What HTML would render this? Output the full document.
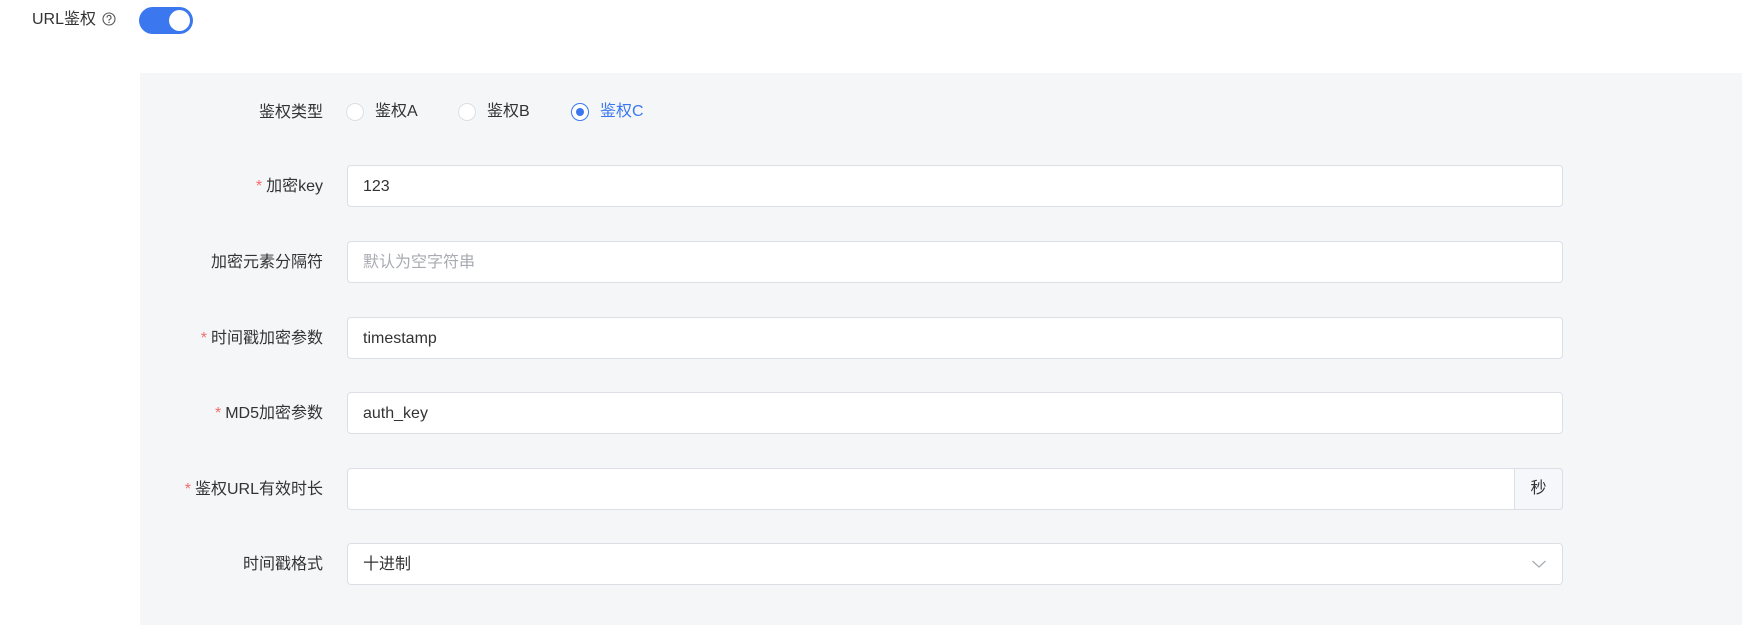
<!DOCTYPE html>
<html><head><meta charset="utf-8"><style>
*{box-sizing:border-box;margin:0;padding:0}
body{width:1761px;height:643px;background:#fff;font-family:"Liberation Sans","Noto Sans CJK SC",sans-serif;font-size:16px;color:#333;position:relative;overflow:hidden}
.abs{position:absolute}
.panel{left:140px;top:73px;width:1602px;height:552px;background:#f5f6f8}
.lbl{right:1438px;width:250px;text-align:right;height:42px;line-height:43px;white-space:nowrap}
.lbl .s{color:#f56c6c;margin-right:4px}
.inp{left:347px;width:1216px;height:42px;background:#fff;border:1px solid #dcdfe6;border-radius:4px;line-height:41px;padding-left:15px}
.ph{color:#a8abb2}
.radio{width:18px;height:18px;border:1px solid #dcdfe6;border-radius:50%;background:#fff;top:103px}
</style></head><body>
<div class="abs" style="left:32px;top:9px;line-height:22px;">URL鉴权</div>
<svg class="abs" style="left:102px;top:12px" width="14" height="14" viewBox="0 0 14 14"><circle cx="7" cy="7" r="6" fill="none" stroke="#555" stroke-width="1.1"/><path d="M5 5.6a2 2 0 1 1 2.6 1.8c-.5.2-.6.5-.6 1v.4" fill="none" stroke="#555" stroke-width="1.1"/><circle cx="7" cy="10.3" r=".7" fill="#555"/></svg>
<div class="abs" style="left:139px;top:7px;width:54px;height:27px;border-radius:14px;background:#3b78f0"></div>
<div class="abs" style="left:169px;top:10px;width:21px;height:21px;border-radius:50%;background:#fff"></div>
<div class="abs panel"></div>

<div class="abs lbl" style="top:91px">鉴权类型</div>
<div class="abs radio" style="left:346px"></div><div class="abs" style="left:375px;top:101px;line-height:22px">鉴权A</div>
<div class="abs radio" style="left:458px"></div><div class="abs" style="left:487px;top:101px;line-height:22px">鉴权B</div>
<div class="abs radio" style="left:571px;border-color:#3b78f0"></div><div class="abs" style="left:576px;top:108px;width:8px;height:8px;border-radius:50%;background:#3b78f0"></div>
<div class="abs" style="left:600px;top:101px;line-height:22px;color:#3b78f0">鉴权C</div>

<div class="abs lbl" style="top:165px"><span class="s">*</span>加密key</div>
<div class="abs inp" style="top:165px">123</div>
<div class="abs lbl" style="top:241px">加密元素分隔符</div>
<div class="abs inp" style="top:241px"><span class="ph">默认为空字符串</span></div>
<div class="abs lbl" style="top:317px"><span class="s">*</span>时间戳加密参数</div>
<div class="abs inp" style="top:317px">timestamp</div>
<div class="abs lbl" style="top:392px"><span class="s">*</span>MD5加密参数</div>
<div class="abs inp" style="top:392px">auth_key</div>
<div class="abs lbl" style="top:468px"><span class="s">*</span>鉴权URL有效时长</div>
<div class="abs inp" style="top:468px"></div>
<div class="abs" style="left:1514px;top:468px;width:49px;height:42px;background:#f5f7fa;border:1px solid #dcdfe6;border-radius:0 4px 4px 0;text-align:center;line-height:40px">秒</div>
<div class="abs lbl" style="top:543px">时间戳格式</div>
<div class="abs inp" style="top:543px">十进制</div>
<svg class="abs" style="left:1531px;top:559px" width="16" height="10" viewBox="0 0 16 10"><path d="M1.5 2l6.5 6 6.5-6" fill="none" stroke="#a8abb2" stroke-width="1.2"/></svg>
</body></html>
